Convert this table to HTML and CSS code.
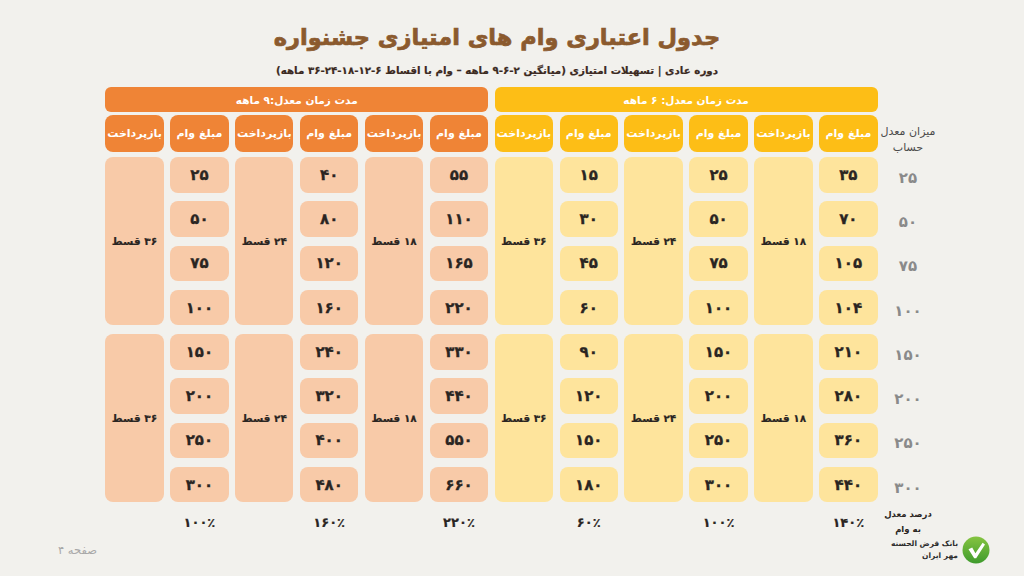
FILE: index.html
```html
<!DOCTYPE html>
<html lang="fa">
<head>
<meta charset="utf-8">
<title>جدول اعتباری وام های امتیازی جشنواره</title>
<link rel="stylesheet" href="styles.css">
</head>
<body>
<div class="slide">
  <header class="titles" dir="rtl">
    <h1 class="title">جدول اعتباری وام های امتیازی جشنواره</h1>
    <p class="subtitle">دوره عادی | تسهیلات امتیازی (میانگین ۲-۶-۹ ماهه – وام با اقساط ۶-۱۲-۱۸-۲۴-۳۶ ماهه)</p>
  </header>

  <section class="table" dir="rtl">
    <div class="head-grid">
      <div class="blank"></div>
      <div class="bar bar-yellow">مدت زمان معدل: ۶ ماهه</div>
      <div class="bar bar-orange">مدت زمان معدل:۹ ماهه</div>

      <div class="label-head">میزان معدل<br>حساب</div>
      <div class="th th-yellow">مبلغ وام</div>
      <div class="th th-yellow">بازپرداخت</div>
      <div class="th th-yellow">مبلغ وام</div>
      <div class="th th-yellow">بازپرداخت</div>
      <div class="th th-yellow">مبلغ وام</div>
      <div class="th th-yellow">بازپرداخت</div>
      <div class="th th-orange">مبلغ وام</div>
      <div class="th th-orange">بازپرداخت</div>
      <div class="th th-orange">مبلغ وام</div>
      <div class="th th-orange">بازپرداخت</div>
      <div class="th th-orange">مبلغ وام</div>
      <div class="th th-orange">بازپرداخت</div>
    </div>

    <div class="body-grid">
      <!-- group 1 row 1 -->
      <div class="lbl">۲۵</div>
      <div class="td y">۳۵</div>
      <div class="td y span">۱۸ قسط</div>
      <div class="td y">۲۵</div>
      <div class="td y span">۲۴ قسط</div>
      <div class="td y">۱۵</div>
      <div class="td y span">۳۶ قسط</div>
      <div class="td o">۵۵</div>
      <div class="td o span">۱۸ قسط</div>
      <div class="td o">۴۰</div>
      <div class="td o span">۲۴ قسط</div>
      <div class="td o">۲۵</div>
      <div class="td o span">۳۶ قسط</div>
      <!-- row 2 -->
      <div class="lbl">۵۰</div>
      <div class="td y">۷۰</div>
      <div class="td y">۵۰</div>
      <div class="td y">۳۰</div>
      <div class="td o">۱۱۰</div>
      <div class="td o">۸۰</div>
      <div class="td o">۵۰</div>
      <!-- row 3 -->
      <div class="lbl">۷۵</div>
      <div class="td y">۱۰۵</div>
      <div class="td y">۷۵</div>
      <div class="td y">۴۵</div>
      <div class="td o">۱۶۵</div>
      <div class="td o">۱۲۰</div>
      <div class="td o">۷۵</div>
      <!-- row 4 -->
      <div class="lbl">۱۰۰</div>
      <div class="td y">۱۰۴</div>
      <div class="td y">۱۰۰</div>
      <div class="td y">۶۰</div>
      <div class="td o">۲۲۰</div>
      <div class="td o">۱۶۰</div>
      <div class="td o">۱۰۰</div>

      <!-- group 2 row 1 -->
      <div class="lbl">۱۵۰</div>
      <div class="td y">۲۱۰</div>
      <div class="td y span">۱۸ قسط</div>
      <div class="td y">۱۵۰</div>
      <div class="td y span">۲۴ قسط</div>
      <div class="td y">۹۰</div>
      <div class="td y span">۳۶ قسط</div>
      <div class="td o">۳۳۰</div>
      <div class="td o span">۱۸ قسط</div>
      <div class="td o">۲۴۰</div>
      <div class="td o span">۲۴ قسط</div>
      <div class="td o">۱۵۰</div>
      <div class="td o span">۳۶ قسط</div>
      <!-- row 2 -->
      <div class="lbl">۲۰۰</div>
      <div class="td y">۲۸۰</div>
      <div class="td y">۲۰۰</div>
      <div class="td y">۱۲۰</div>
      <div class="td o">۴۴۰</div>
      <div class="td o">۳۲۰</div>
      <div class="td o">۲۰۰</div>
      <!-- row 3 -->
      <div class="lbl">۲۵۰</div>
      <div class="td y">۳۶۰</div>
      <div class="td y">۲۵۰</div>
      <div class="td y">۱۵۰</div>
      <div class="td o">۵۵۰</div>
      <div class="td o">۴۰۰</div>
      <div class="td o">۲۵۰</div>
      <!-- row 4 -->
      <div class="lbl">۳۰۰</div>
      <div class="td y">۴۴۰</div>
      <div class="td y">۳۰۰</div>
      <div class="td y">۱۸۰</div>
      <div class="td o">۶۶۰</div>
      <div class="td o">۴۸۰</div>
      <div class="td o">۳۰۰</div>

      <!-- percentages -->
      <div class="pct-label">درصد معدل<br>به وام</div>
      <div class="pct">۱۴۰٪</div>
      <div class="blank"></div>
      <div class="pct">۱۰۰٪</div>
      <div class="blank"></div>
      <div class="pct">۶۰٪</div>
      <div class="blank"></div>
      <div class="pct">۲۲۰٪</div>
      <div class="blank"></div>
      <div class="pct">۱۶۰٪</div>
      <div class="blank"></div>
      <div class="pct">۱۰۰٪</div>
      <div class="blank"></div>
    </div>
  </section>

  <footer class="footer">
    <span class="page-num" dir="rtl">صفحه ۴</span>
    <div class="logo" dir="rtl">
      <svg class="logo-mark" width="28" height="28" viewBox="0 0 28 28" aria-hidden="true">
        <defs>
          <linearGradient id="lg" x1="0" y1="0" x2="0" y2="1">
            <stop offset="0" stop-color="#86c441"/>
            <stop offset="1" stop-color="#3f9b2d"/>
          </linearGradient>
        </defs>
        <circle cx="14" cy="14" r="13.5" fill="url(#lg)"/>
        <path d="M6.5 13.2 L10.2 11.6 L13.4 17.2 L20.6 6.8 L23 8.4 L14.2 22.2 L12.2 22.2 Z" fill="#ffffff"/>
      </svg>
      <div class="logo-text">بانک قرض الحسنه<br>مهر ایران</div>
    </div>
  </footer>
</div>
</body>
</html>
```

FILE: styles.css
```css
* { box-sizing: border-box; }

html, body {
  margin: 0;
  padding: 0;
  background: #f2f1ed;
}

body {
  font-family: "DejaVu Sans", "Noto Sans", sans-serif;
  color: #2a2522;
}

.slide {
  width: 1024px;
  height: 576px;
  overflow: hidden;
  padding-top: 18px;
  background: #f2f1ed;
}

.titles {
  text-align: center;
  padding-right: 30px;
}

.title {
  margin: 0;
  font-size: 22.5px;
  line-height: 38px;
  font-weight: bold;
  color: #8b5a2e;
  -webkit-text-stroke: 0.7px #8b5a2e;
}

.subtitle {
  margin: 5px 0 0;
  font-size: 10.3px;
  line-height: 18px;
  font-weight: bold;
  color: #3b2a1f;
  -webkit-text-stroke: 0.2px #3b2a1f;
}

.table {
  width: 827px;
  margin: 8px 0 0 105px;
}

.head-grid,
.body-grid {
  display: grid;
  grid-template-columns: 48px repeat(12, 58.4px);
  column-gap: 6.5px;
}

.head-grid {
  grid-template-rows: 25px 37px;
  row-gap: 3px;
}

.body-grid {
  margin-top: 5px;
  grid-template-rows: repeat(8, 35.5px) 22px;
  row-gap: 8.75px;
}

.bar {
  grid-column: span 6;
  border-radius: 6px;
  color: #fff;
  font-size: 10.5px;
  font-weight: bold;
  display: flex;
  align-items: center;
  justify-content: center;
}

.bar-yellow { background: #fdbe16; }
.bar-orange { background: #ef8436; }

.th {
  border-radius: 8px;
  color: #fff;
  font-size: 11px;
  font-weight: bold;
  display: flex;
  align-items: center;
  justify-content: center;
  white-space: nowrap;
}

.th-yellow { background: #fdbe16; }
.th-orange { background: #ef8436; }

.label-head {
  font-size: 11px;
  line-height: 16px;
  padding-top: 9px;
  text-align: center;
  white-space: nowrap;
  color: #4a4a4a;
  display: flex;
  justify-content: center;
}

.td {
  border-radius: 8px;
  font-size: 15px;
  font-weight: bold;
  display: flex;
  align-items: center;
  justify-content: center;
  color: #2a2522;
  -webkit-text-stroke: 0.3px #2a2522;
}

.td.y { background: #fee49c; }
.td.o { background: #f8caa8; }

.td.span {
  grid-row: span 4;
  font-size: 10.5px;
  -webkit-text-stroke: 0.2px #2a2522;
}

.lbl {
  display: flex;
  align-items: center;
  justify-content: center;
  padding-top: 6px;
  font-size: 15px;
  font-weight: bold;
  color: #8a8a8a;
}

.pct {
  display: flex;
  align-items: center;
  justify-content: center;
  font-size: 13px;
  font-weight: bold;
  color: #2a2522;
  -webkit-text-stroke: 0.2px #2a2522;
}

.pct-label {
  font-size: 8.5px;
  line-height: 15px;
  font-weight: bold;
  text-align: center;
  white-space: nowrap;
  display: flex;
  justify-content: center;
  margin-top: -4px;
  color: #2a2522;
}

.footer {
  display: flex;
  align-items: center;
  justify-content: space-between;
  height: 30px;
  margin-top: 2px;
  padding: 0 34px 0 58px;
}

.page-num {
  font-size: 11.5px;
  color: #a8a8a8;
}

.logo {
  display: flex;
  align-items: center;
  gap: 4px;
}

.logo-mark { display: block; }

.logo-text {
  font-size: 7.5px;
  line-height: 12px;
  font-weight: bold;
  white-space: nowrap;
  color: #2d2d2d;
  text-align: right;
}
```
